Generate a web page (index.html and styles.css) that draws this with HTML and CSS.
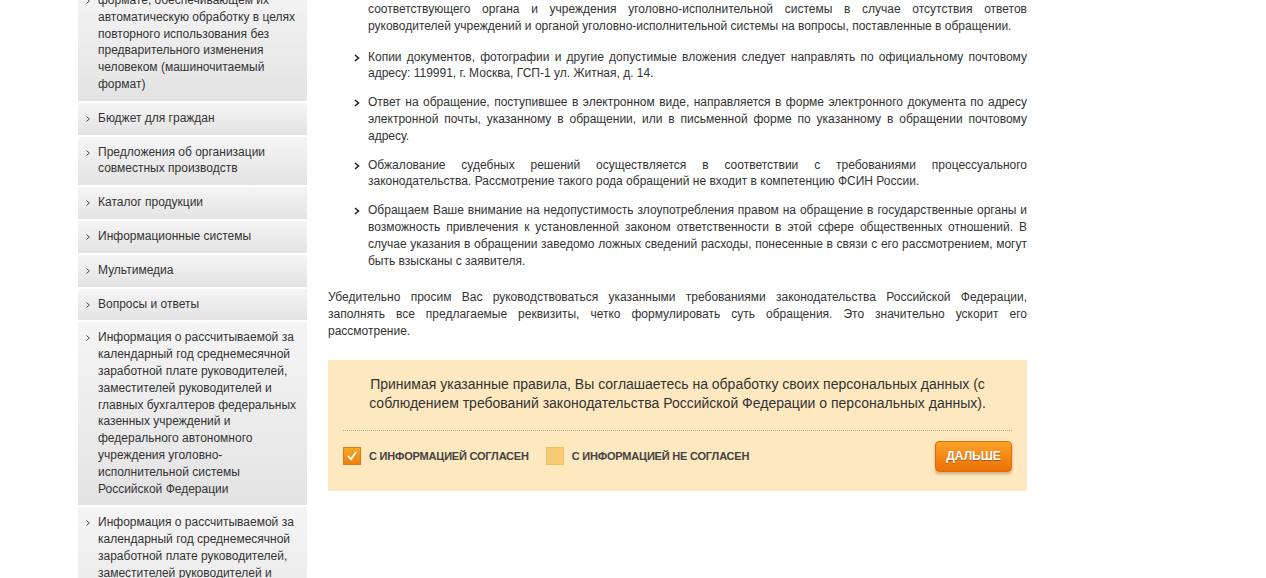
FILE: index.html
```html
<!DOCTYPE html>
<html lang="ru">
<head>
    <meta charset="UTF-8">
    <meta name="viewport" content="width=device-width, initial-scale=1.0">
    <title>Обращения граждан</title>
    <link rel="stylesheet" href="styles.css">
</head>
<body>

<div class="page">
    <!-- Left menu -->
    <ul class="side-menu">
        <li class="side-item">
            <svg class="side-chev" viewBox="0 0 4 6"><polyline points="0.5,0.5 3.3,3 0.5,5.5"/></svg>
            <a href="#">формате, обеспечивающем их автоматическую обработку в целях повторного использования без предварительного изменения человеком (машиночитаемый формат)</a>
        </li>
        <li class="side-item">
            <svg class="side-chev" viewBox="0 0 4 6"><polyline points="0.5,0.5 3.3,3 0.5,5.5"/></svg>
            <a href="#">Бюджет для граждан</a>
        </li>
        <li class="side-item">
            <svg class="side-chev" viewBox="0 0 4 6"><polyline points="0.5,0.5 3.3,3 0.5,5.5"/></svg>
            <a href="#">Предложения об организации совместных производств</a>
        </li>
        <li class="side-item">
            <svg class="side-chev" viewBox="0 0 4 6"><polyline points="0.5,0.5 3.3,3 0.5,5.5"/></svg>
            <a href="#">Каталог продукции</a>
        </li>
        <li class="side-item">
            <svg class="side-chev" viewBox="0 0 4 6"><polyline points="0.5,0.5 3.3,3 0.5,5.5"/></svg>
            <a href="#">Информационные системы</a>
        </li>
        <li class="side-item">
            <svg class="side-chev" viewBox="0 0 4 6"><polyline points="0.5,0.5 3.3,3 0.5,5.5"/></svg>
            <a href="#">Мультимедиа</a>
        </li>
        <li class="side-item">
            <svg class="side-chev" viewBox="0 0 4 6"><polyline points="0.5,0.5 3.3,3 0.5,5.5"/></svg>
            <a href="#">Вопросы и ответы</a>
        </li>
        <li class="side-item">
            <svg class="side-chev" viewBox="0 0 4 6"><polyline points="0.5,0.5 3.3,3 0.5,5.5"/></svg>
            <a href="#">Информация о рассчитываемой за календарный год среднемесячной заработной плате руководителей, заместителей руководителей и главных бухгалтеров федеральных казенных учреждений и федерального автономного учреждения уголовно-исполнительной системы Российской Федерации</a>
        </li>
        <li class="side-item">
            <svg class="side-chev" viewBox="0 0 4 6"><polyline points="0.5,0.5 3.3,3 0.5,5.5"/></svg>
            <a href="#">Информация о рассчитываемой за календарный год среднемесячной заработной плате руководителей, заместителей руководителей и главных бухгалтеров федеральных государственных унитарных предприятий уголовно-исполнительной системы</a>
        </li>
    </ul>

    <!-- Main content -->
    <div class="content">
        <ul class="rules">
            <li class="rule rule-tail">
                <svg class="rule-chev" viewBox="0 0 6 8"><polyline points="1,1 4.5,4 1,7"/></svg>
                <div class="rule-text">
                    <span class="full-line">соответствующего органа и учреждения уголовно-исполнительной системы в случае отсутствия ответов</span>
                    руководителей учреждений и органой уголовно-исполнительной системы на вопросы, поставленные в обращении.
                </div>
            </li>
            <li class="rule">
                <svg class="rule-chev" viewBox="0 0 6 8"><polyline points="1,1 4.5,4 1,7"/></svg>
                <div class="rule-text">Копии документов, фотографии и другие допустимые вложения следует направлять по официальному почтовому адресу: 119991, г. Москва, ГСП-1 ул. Житная, д. 14.</div>
            </li>
            <li class="rule">
                <svg class="rule-chev" viewBox="0 0 6 8"><polyline points="1,1 4.5,4 1,7"/></svg>
                <div class="rule-text">Ответ на обращение, поступившее в электронном виде, направляется в форме электронного документа по адресу электронной почты, указанному в обращении, или в письменной форме по указанному в обращении почтовому адресу.</div>
            </li>
            <li class="rule">
                <svg class="rule-chev" viewBox="0 0 6 8"><polyline points="1,1 4.5,4 1,7"/></svg>
                <div class="rule-text">Обжалование судебных решений осуществляется в соответствии с требованиями процессуального законодательства. Рассмотрение такого рода обращений не входит в компетенцию ФСИН России.</div>
            </li>
            <li class="rule">
                <svg class="rule-chev" viewBox="0 0 6 8"><polyline points="1,1 4.5,4 1,7"/></svg>
                <div class="rule-text">Обращаем Ваше внимание на недопустимость злоупотребления правом на обращение в государственные органы и возможность привлечения к установленной законом ответственности в этой сфере общественных отношений. В случае указания в обращении заведомо ложных сведений расходы, понесенные в связи с его рассмотрением, могут быть взысканы с заявителя.</div>
            </li>
        </ul>

        <p class="note">Убедительно просим Вас руководствоваться указанными требованиями законодательства Российской Федерации, заполнять все предлагаемые реквизиты, четко формулировать суть обращения. Это значительно ускорит его рассмотрение.</p>

        <!-- Agreement box -->
        <form class="agree-box" action="#" method="post">
            <p class="agree-text">Принимая указанные правила, Вы соглашаетесь на обработку своих персональных данных (с соблюдением требований законодательства Российской Федерации о персональных данных).</p>
            <div class="agree-row">
                <label class="choice">
                    <span class="check checked">
                        <svg viewBox="0 0 18 18"><polyline points="4.5,9 8,12.5 13.5,4.5"/></svg>
                    </span>
                    С информацией согласен
                </label>
                <label class="choice">
                    <span class="check"></span>
                    С информацией не согласен
                </label>
                <button class="next-btn" type="submit">Дальше</button>
            </div>
        </form>
    </div>
</div>

</body>
</html>
```

FILE: styles.css
```css
body {
    font-family: 'Liberation Sans', Arial, sans-serif;
    font-size: 12px;
    line-height: 1.4;
    color: #333;
    background: #fff;
    margin: 0;
    padding: 0;
    overflow: hidden;
}
.page {
    width: 1110px;
    margin: 0 auto;
    display: flex;
    align-items: flex-start;
    gap: 21px;
}

/* left menu */
.side-menu {
    list-style: none;
    margin: -15px 0 0 0;
    padding: 0;
    width: 229px;
    flex-shrink: 0;
}
.side-item {
    display: flex;
    align-items: flex-start;
    padding: 7px 8px 8px 8px;
    margin-bottom: 2px;
    background: linear-gradient(to bottom, #f5f5f5, #e3e3e3);
}
.side-item a {
    color: #333;
    text-decoration: none;
}
.side-chev {
    width: 4px;
    height: 6px;
    margin: 6px 8px 0 0;
    flex-shrink: 0;
    fill: none;
    stroke: #333;
    stroke-width: 0.9;
}

/* main column */
.content {
    width: 699px;
    padding-top: 1px;
}
.rules {
    list-style: none;
    margin: 0 0 20px 0;
    padding: 0;
}
.rule {
    display: flex;
    align-items: flex-start;
    margin: 0 0 12px 26px;
}
.rule:last-child {
    margin-bottom: 0;
}
.rule-tail {
    margin-bottom: 14px;
}
.rule-tail .rule-chev {
    visibility: hidden;
}
.rule-chev {
    width: 6px;
    height: 8px;
    margin: 5px 8px 0 0;
    flex-shrink: 0;
    fill: none;
    stroke: #222;
    stroke-width: 1.6;
}
.rule-text {
    flex: 1;
    text-align: justify;
}
.full-line {
    display: block;
    text-align-last: justify;
}
.note {
    margin: 0 0 20px 0;
    text-align: justify;
}

/* agreement */
.agree-box {
    background: #fde8c0;
    padding: 15px 15px 19px;
}
.agree-text {
    margin: 0;
    font-size: 14px;
    line-height: 19px;
    text-align: center;
    color: #333;
    padding-bottom: 17px;
    border-bottom: 1px dotted #b8a88a;
}
.agree-row {
    display: flex;
    align-items: center;
    padding-top: 10px;
}
.choice {
    display: flex;
    align-items: center;
    gap: 8px;
    margin-right: 17px;
    font-size: 11px;
    font-weight: bold;
    letter-spacing: -0.2px;
    text-transform: uppercase;
    color: #444;
    cursor: pointer;
}
.check {
    width: 18px;
    height: 18px;
    box-sizing: border-box;
    background: #f7cb74;
    border: 1px solid #efbf62;
    display: flex;
}
.check.checked {
    background: linear-gradient(to bottom, #f9a626, #e9820e);
    border-color: #e08010;
}
.check svg {
    width: 16px;
    height: 16px;
    fill: none;
    stroke: #fff;
    stroke-width: 2;
}
.next-btn {
    margin-left: auto;
    width: 77px;
    height: 31px;
    border: 1px solid #de6e08;
    border-radius: 4px;
    background: linear-gradient(to bottom, #fca32a, #ec6f06);
    box-shadow: 0 2px 3px rgba(120, 60, 0, 0.35);
    color: #fff;
    font-family: 'Liberation Sans', Arial, sans-serif;
    font-size: 12px;
    font-weight: bold;
    text-transform: uppercase;
    text-shadow: 0 1px 1px rgba(0, 0, 0, 0.35);
    cursor: pointer;
}
.next-btn:hover {
    background: linear-gradient(to bottom, #fdb040, #f07c10);
}
```
